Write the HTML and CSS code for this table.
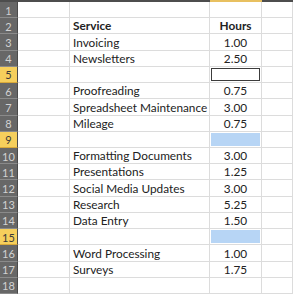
FILE: index.html
```html
<!DOCTYPE html>
<html>
<head>
<meta charset="utf-8">
<link rel="stylesheet" href="styles.css">
</head>
<body>
<div class="topbar">
  <div class="tb tb-rh"></div>
  <div class="tb tb-a"></div>
  <div class="tb tb-b"></div>
  <div class="tb tb-c sel"></div>
  <div class="tb tb-d"></div>
</div>
<div class="sheet">
  <div class="rh">1</div><div class="c"></div><div class="c"></div><div class="c"></div><div class="c"></div>
  <div class="rh">2</div><div class="c"></div><div class="c b">Service</div><div class="c n b">Hours</div><div class="c"></div>
  <div class="rh">3</div><div class="c"></div><div class="c">Invoicing</div><div class="c n">1.00</div><div class="c"></div>
  <div class="rh">4</div><div class="c"></div><div class="c">Newsletters</div><div class="c n">2.50</div><div class="c"></div>
  <div class="rh hl">5</div><div class="c"></div><div class="c"></div><div class="c n"><span class="active"></span></div><div class="c"></div>
  <div class="rh">6</div><div class="c"></div><div class="c">Proofreading</div><div class="c n">0.75</div><div class="c"></div>
  <div class="rh">7</div><div class="c"></div><div class="c">Spreadsheet Maintenance</div><div class="c n">3.00</div><div class="c"></div>
  <div class="rh">8</div><div class="c"></div><div class="c">Mileage</div><div class="c n">0.75</div><div class="c"></div>
  <div class="rh hl">9</div><div class="c"></div><div class="c"></div><div class="c n"><span class="blue"></span></div><div class="c"></div>
  <div class="rh">10</div><div class="c"></div><div class="c">Formatting Documents</div><div class="c n">3.00</div><div class="c"></div>
  <div class="rh">11</div><div class="c"></div><div class="c">Presentations</div><div class="c n">1.25</div><div class="c"></div>
  <div class="rh">12</div><div class="c"></div><div class="c">Social Media Updates</div><div class="c n">3.00</div><div class="c"></div>
  <div class="rh">13</div><div class="c"></div><div class="c">Research</div><div class="c n">5.25</div><div class="c"></div>
  <div class="rh">14</div><div class="c"></div><div class="c">Data Entry</div><div class="c n">1.50</div><div class="c"></div>
  <div class="rh hl">15</div><div class="c"></div><div class="c"></div><div class="c n"><span class="blue"></span></div><div class="c"></div>
  <div class="rh">16</div><div class="c"></div><div class="c">Word Processing</div><div class="c n">1.00</div><div class="c"></div>
  <div class="rh">17</div><div class="c"></div><div class="c">Surveys</div><div class="c n">1.75</div><div class="c"></div>
  <div class="rh">18</div><div class="c"></div><div class="c"></div><div class="c"></div><div class="c"></div>
</div>
</body>
</html>
```
FILE: styles.css
```css
html, body {
  margin: 0;
  padding: 0;
  background: #ffffff;
}
body {
  width: 293px;
  height: 294px;
  overflow: hidden;
  font-family: Lato, "Open Sans", sans-serif;
}
.topbar {
  display: grid;
  grid-template-columns: 18px 52px 140px 52px 1fr;
  height: 2px;
}
.tb { background: #4d4d4d; }
.tb.sel { background: #e8c060; }
.sheet {
  display: grid;
  grid-template-columns: 18px 52px 140px 52px 1fr;
  grid-template-rows: repeat(18, minmax(0, 1fr));
  height: 292px;
}
.rh {
  background: #676767;
  color: #d2d2d2;
  font-size: 11px;
  line-height: 1;
  display: flex;
  align-items: center;
  justify-content: center;
  border-right: 1px solid #4a4a4a;
  border-bottom: 1px solid #8a8a8a;
  box-sizing: border-box;
  padding-top: 1px;
  min-height: 0;
}
.rh.hl {
  background: #f6cf5c;
  color: #3a3a3a;
  border-bottom-color: #d9a93a;
}
.c {
  border-right: 1px solid #dcdcdc;
  border-bottom: 1px solid #dcdcdc;
  box-sizing: border-box;
  font-size: 11.8px;
  line-height: 1;
  color: #222222;
  display: flex;
  align-items: center;
  padding-left: 3px;
  padding-top: 1px;
  white-space: nowrap;
  overflow: visible;
  position: relative;
  min-height: 0;
}
.c.b { font-weight: bold; }
.c.n {
  justify-content: center;
  padding-left: 0;
}
.active {
  position: absolute;
  left: 1px;
  right: 1px;
  top: 1px;
  bottom: 1px;
  border: 1px solid #3c3c3c;
  background: #fff;
}
.blue {
  position: absolute;
  left: 1px;
  right: 1px;
  top: 1px;
  bottom: 1px;
  background: #b7d5f5;
}
```
